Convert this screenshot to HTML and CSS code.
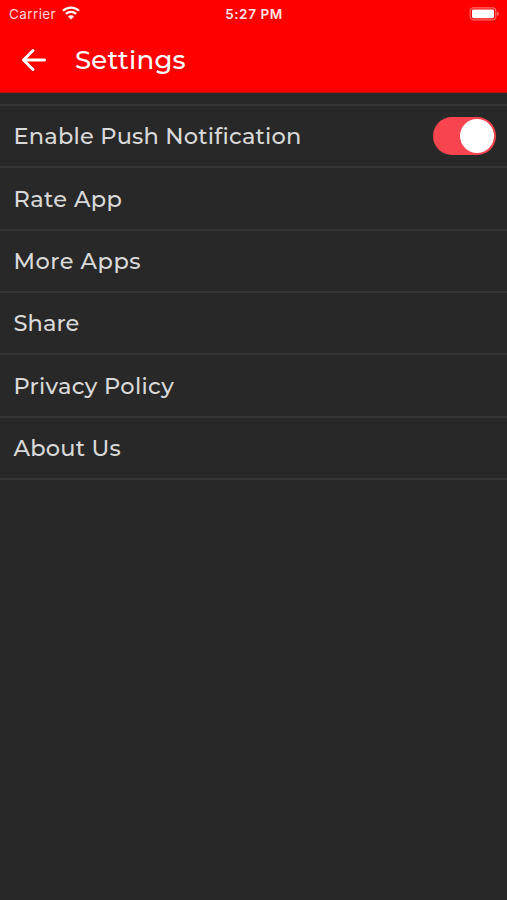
FILE: index.html
```html
<!DOCTYPE html>
<html lang="en">
<head>
    <meta charset="UTF-8">
    <meta name="viewport" content="width=device-width, initial-scale=1.0">
    <title>Settings</title>
    <link rel="stylesheet" href="styles.css">
</head>
<body>
    <header>
        <div class="status">
            <div class="carrier">
                <span>Carrier</span>
                <svg class="wifi" viewBox="0 0 18 14" width="18" height="14">
                    <path d="M1 4.8a11.5 11.5 0 0 1 16 0M3.9 7.9a7.3 7.3 0 0 1 10.2 0" />
                    <path class="dot" d="M9 13.6L5.9 10.6a4.4 4.4 0 0 1 6.2 0z" />
                </svg>
            </div>
            <span class="time">5:27 PM</span>
            <div class="power">
                <svg viewBox="0 0 30 14" width="30" height="14">
                    <rect class="case" x="1.2" y="0.8" width="25.6" height="12" rx="3.2" />
                    <rect class="level" x="3" y="2.4" width="22" height="8.8" rx="1.4" />
                    <path class="tip" d="M28 4.6q2 .9 2 2.2t-2 2.2z" />
                </svg>
            </div>
        </div>
        <div class="bar">
            <svg class="back" viewBox="0 0 26 24" width="26" height="24">
                <path d="M23.5 12H2.5M12 2.5L2.5 12l9.5 9.5" />
            </svg>
            <h1>Settings</h1>
        </div>
    </header>
    <main>
        <ul class="settings">
            <li>
                <label class="push" for="push">Enable Push Notification</label>
                <input class="switch" type="checkbox" id="push" name="push" checked>
            </li>
            <li><span class="rate">Rate App</span></li>
            <li><span class="more">More Apps</span></li>
            <li><span class="share">Share</span></li>
            <li><span class="privacy">Privacy Policy</span></li>
            <li><span class="about">About Us</span></li>
        </ul>
    </main>
</body>
</html>
```
FILE: styles.css
```css
* {
  padding: 0;
  margin: 0;
  box-sizing: border-box;
}
body {
  min-height: 100vh;
  background-color: #282828;
  color: #d9d9d9;
  font-family: Montserrat, Inter, sans-serif;
}
header {
  height: 93px;
  background-color: #ff0000;
  border-bottom: 1px solid #b81212;
  color: #fff;
}
.status {
  display: grid;
  grid-template-columns: 1fr auto 1fr;
  align-items: center;
  height: 27px;
  padding: 0 8px 0 9px;
  font-family: Inter, sans-serif;
  font-size: 13.5px;
}
.carrier {
  display: flex;
  align-items: center;
  gap: 6px;
  color: #ffd6d6;
  letter-spacing: 0.4px;
}
.wifi {
  margin-bottom: 2px;
  fill: none;
  stroke: #fff;
  stroke-width: 2.2;
}
.wifi .dot {
  fill: #fff;
  stroke: none;
}
.time {
  font-weight: 600;
  letter-spacing: 0.6px;
  color: #ffe6e6;
}
.power {
  display: flex;
  justify-content: flex-end;
}
.case {
  fill: none;
  stroke: #ff6a6a;
  stroke-width: 1.2;
}
.level {
  fill: #fff;
}
.tip {
  fill: #ff6a6a;
}
.bar {
  display: flex;
  align-items: center;
  gap: 28px;
  height: 65px;
  padding-left: 21px;
}
.back {
  fill: none;
  stroke: #fff;
  stroke-width: 3;
  stroke-linecap: round;
  stroke-linejoin: round;
}
h1 {
  font-size: 26px;
  font-weight: 500;
  letter-spacing: 0.2px;
}
.settings {
  margin-top: 11px;
  border-top: 2px solid #353535;
  list-style: none;
}
li {
  display: flex;
  justify-content: space-between;
  align-items: center;
  height: 62.35px;
  padding: 0 11px 0 13.5px;
  border-bottom: 2px solid #353535;
  font-size: 22.5px;
  font-weight: 500;
  letter-spacing: 0.2px;
}
li span {
  padding-top: 0.4px;
}
.push {
  padding-bottom: 1px;
}
.rate {
  padding-top: 1.4px;
  letter-spacing: 0.4px;
}
.more {
  letter-spacing: 0.5px;
}
.share {
  letter-spacing: 0.1px;
}
.privacy {
  padding-top: 1.4px;
  letter-spacing: 0.3px;
}
.about {
  letter-spacing: 0.2px;
}
.switch {
  appearance: none;
  width: 63px;
  height: 38px;
  padding: 2px;
  border-radius: 19px;
  background-color: #f7444e;
}
.switch::before {
  content: '';
  display: block;
  width: 34px;
  height: 34px;
  border-radius: 50%;
  background-color: #fff;
}
.switch:checked::before {
  margin-left: auto;
}
```
